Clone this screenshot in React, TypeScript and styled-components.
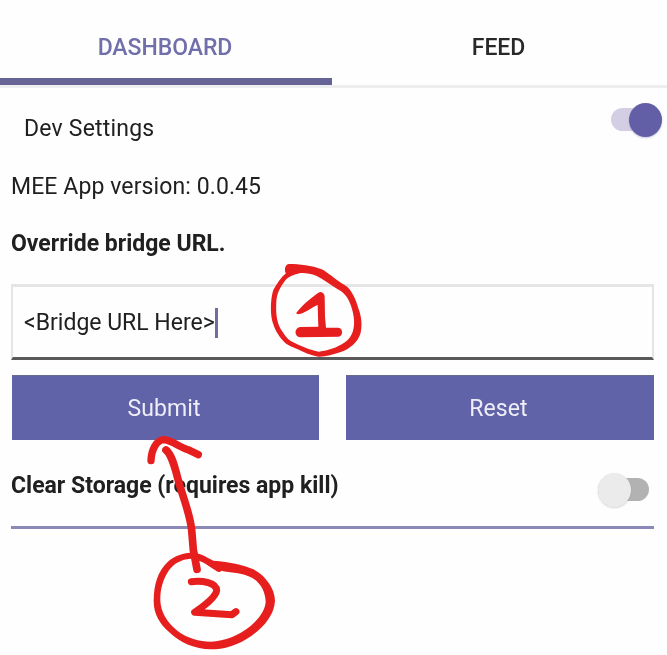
import React from "react";
import styled, { createGlobalStyle } from "styled-components";

const GlobalStyle = createGlobalStyle`
  * { box-sizing: border-box; }
  body { margin: 0; background: #fefefe; overflow: hidden; }
`;

const accent = "#6163a8";

const Screen = styled.main`
  position: relative;
  width: 667px;
  height: 655px;
  overflow: hidden;
  background: #fefefe;
  color: #202020;
  font-family: Roboto, "Liberation Sans", sans-serif;
`;

const Page = styled.div`
  display: flex;
  flex-direction: column;
  filter: blur(0.6px);
`;

const Tabs = styled.nav`
  display: grid;
  grid-template-columns: 332px 1fr;
  height: 88px;
  border-bottom: 3px solid #eeedf0;
`;

const Tab = styled.button<{ $active?: boolean }>`
  height: 85px;
  padding: 17px 2px 0 0;
  border: 0;
  border-bottom: 7px solid ${(p) => (p.$active ? "#666397" : "transparent")};
  background: none;
  color: ${(p) => (p.$active ? "#716fab" : "#292929")};
  font: 500 23px/30px Roboto, sans-serif;
  letter-spacing: ${(p) => (p.$active ? "-0.05px" : "-0.1px")};
`;

const Content = styled.section`
  display: flex;
  flex-direction: column;
  padding: 0 13px 0 11px;
`;

const SettingRow = styled.div<{ $height: number; $inset?: number }>`
  display: flex;
  justify-content: space-between;
  height: ${(p) => p.$height}px;
  padding-left: ${(p) => p.$inset ?? 0}px;
`;

const Line = styled.p<{ $bold?: boolean; $top: number; $spacing?: number }>`
  margin: ${(p) => p.$top}px 0 0;
  font-size: 23px;
  line-height: 28px;
  font-weight: ${(p) => (p.$bold ? 700 : 400)};
  letter-spacing: ${(p) => p.$spacing ?? 0}px;
  white-space: pre;
`;

const Switch = styled.span<{ $on?: boolean }>`
  display: flex;
  align-items: center;
  justify-content: ${(p) => (p.$on ? "flex-end" : "flex-start")};
  width: 51px;
  height: 23px;
  margin: ${(p) => (p.$on ? "20px -8px 0 0" : "38px 5px 0 0")};
  background: ${(p) => (p.$on ? "#d4cee5" : "#b2b2b2")};
  border-radius: 12px;
`;

const Thumb = styled.span<{ $on?: boolean }>`
  width: 33px;
  height: 34px;
  flex: none;
  border-radius: 50%;
  background: ${(p) => (p.$on ? "#625fa7" : "#ebebeb")};
  box-shadow: 0 1px 2px ${(p) => (p.$on ? "#7774ba66" : "#99999966")};
`;

const UrlField = styled.div`
  display: flex;
  align-items: center;
  height: 76px;
  margin-top: 26px;
  padding: 1px 0 0 11px;
  border: 3px solid #e5e4e6;
  border-width: 3px 2px;
  border-bottom-color: #59585b;
  font-size: 23px;
  line-height: 30px;
  white-space: pre;
`;

const Caret = styled.span`
  width: 3px;
  height: 30px;
  background: #706da2;
`;

const Actions = styled.div`
  display: grid;
  grid-template-columns: 307px 308px;
  justify-content: space-between;
  height: 65px;
  margin: 15px 0 0 1px;
`;

const Action = styled.button`
  border: 0;
  border-top: 1px solid #686991;
  background: ${accent};
  color: #eeedf8;
  padding: 1px 3px 0 0;
  font: 400 23px/30px Roboto, sans-serif;
  letter-spacing: 0.1px;
`;

const Divider = styled.hr`
  width: 100%;
  height: 3px;
  margin: 0;
  border: 0;
  background: #8b89b9;
`;

const Annotations = styled.svg`
  position: absolute;
  inset: 0;
  pointer-events: none;
`;

function Toggle({ on }: { on?: boolean }) {
  return <Switch $on={on}><Thumb $on={on} /></Switch>;
}

export default function App() {
  return (
    <Screen>
      <GlobalStyle />
      <Page>
        <Tabs>
          <Tab $active>DASHBOARD</Tab>
          <Tab>FEED</Tab>
        </Tabs>
        <Content>
          <SettingRow $height={85} $inset={13}>
            <Line $top={27} $spacing={0.2}>Dev Settings</Line>
            <Toggle on />
          </SettingRow>
          <Line $top={0} $spacing={0.1}>MEE App version: 0.0.45</Line>
          <Line $bold $top={29}>Override bridge URL.</Line>
          <UrlField><span>{"<Bridge URL Here>"}</span><Caret /></UrlField>
          <Actions>
            <Action>Submit</Action>
            <Action>Reset</Action>
          </Actions>
          <SettingRow $height={86}>
            <Line $bold $top={32}>Clear Storage (requires app kill)</Line>
            <Toggle />
          </SettingRow>
          <Divider />
        </Content>
      </Page>
      <Annotations width="667" height="655" viewBox="0 0 667 655" fill="#e61e1e">
        <g transform="translate(250 250) scale(.33333)">
          <path fillRule="evenodd" d="M116 42C150 42 185 46 215 58C235 68 250 85 285 106C305 118 318 150 326 178C336 205 336 228 332 248C325 275 300 297 270 307C250 314 225 321 205 320C180 316 160 306 142 297C125 290 108 284 100 273C85 258 72 235 66 210C60 180 63 140 70 120C80 102 92 83 108 70C103 64 103 44 116 42ZM148 70C130 75 115 80 105 92C90 112 80 130 79 155C77 190 80 215 92 237C102 252 110 265 122 273C150 287 180 301 207 305C235 302 262 292 280 280C300 268 310 250 312 225C314 205 308 180 300 160C292 138 280 127 262 117C240 103 220 88 200 78C180 70 160 68 148 70Z" />
          <path d="M138 190C165 155 190 140 205 128C215 122 224 130 224 140L225 200L228 233L265 233C280 235 280 258 265 260L150 262C132 260 132 234 150 231L205 230L203 165C185 172 165 190 145 193Z" />
        </g>
        <g transform="translate(140 420) scale(.33333)">
          <path fillRule="evenodd" d="M155 398C180 398 198 411 220 422C270 425 315 436 340 448C375 465 405 505 405 542C403 585 370 622 335 647C295 676 250 688 212 688C165 688 120 668 88 637C60 612 40 582 41 540C42 495 52 453 86 423C105 408 130 397 155 398ZM151 416C125 418 101 430 87 451C69 477 60 510 61 542C62 575 82 608 112 632C142 655 178 665 212 665C255 664 296 646 331 619C357 596 377 570 377 544C376 517 362 488 337 474C308 457 269 458 244 452C240 458 233 457 226 451C200 433 180 418 151 416Z" />
          <g fill="none" stroke="#e61e1e" strokeWidth="23" strokeLinecap="round" strokeLinejoin="round">
            <path d="M78 90C100 108 107 157 121 202C134 244 151 289 155 330L160 390L171 448" />
            <path strokeWidth="22" d="M33 122C34 92 48 59 73 59C98 62 118 82 144 89L175 104" />
            <path strokeWidth="21" d="M154 485C188 481 229 488 230 511C227 535 180 565 164 577L276 584L288 575" />
          </g>
        </g>
      </Annotations>
    </Screen>
  );
}
